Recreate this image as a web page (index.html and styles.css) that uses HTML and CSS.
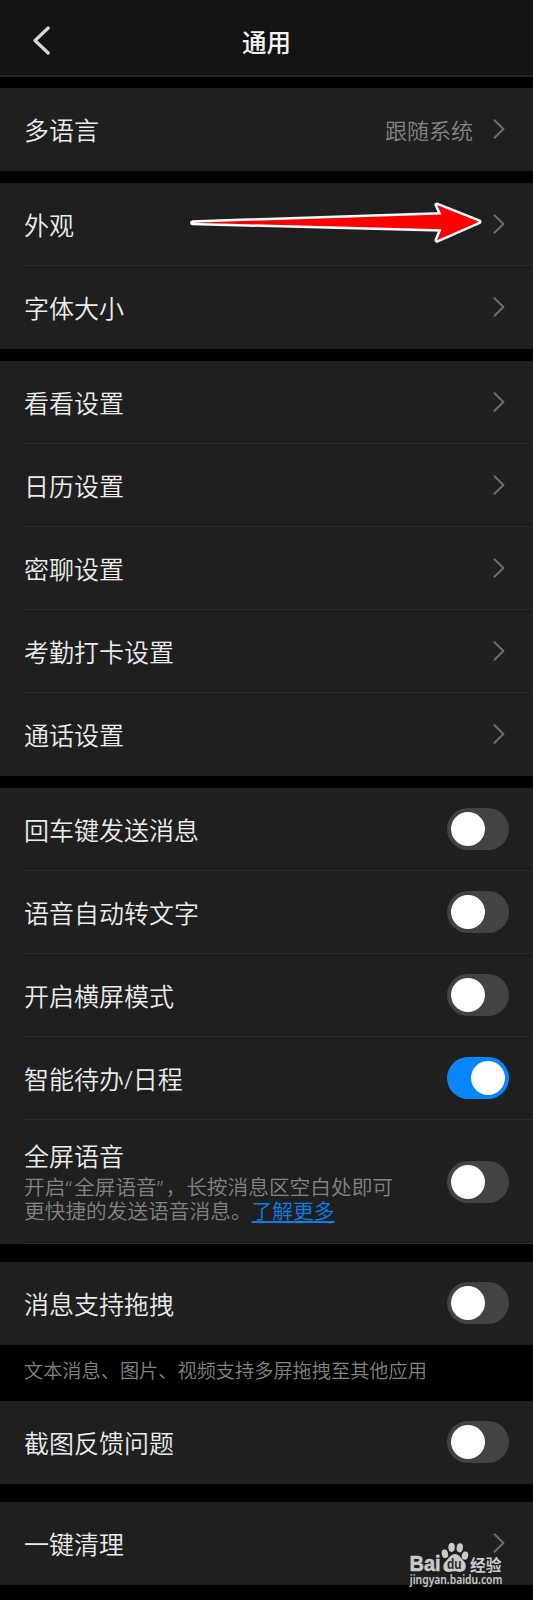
FILE: index.html
```html
<!DOCTYPE html>
<html lang="zh-CN">

<head>
    <meta charset="UTF-8">
    <title>通用</title>
    <link rel="stylesheet" href="styles.css">
</head>

<body>
    <svg class="defs" width="0" height="0">
        <symbol id="chevron" viewBox="0 0 12 20">
            <path d="M1.5 1.2 L10.4 10 L1.5 18.8" fill="none" stroke="#6e6e6e" stroke-width="2" stroke-linecap="round" stroke-linejoin="round" />
        </symbol>
    </svg>

    <header class="header">
        <svg class="back" width="18" height="29" viewBox="0 0 18 29">
            <path d="M15.2 2 L2 14.5 L15.2 27" fill="none" stroke="#d6d6d6" stroke-width="3.2" stroke-linecap="round" stroke-linejoin="round" />
        </svg>
        <h1>通用</h1>
    </header>

    <main>
        <section class="group">
            <div class="row">
                <span class="label">多语言</span>
                <span class="value">跟随系统</span>
                <svg class="chevron"><use href="#chevron" /></svg>
            </div>
        </section>

        <section class="group">
            <div class="row">
                <span class="label">外观</span>
                <svg class="chevron"><use href="#chevron" /></svg>
                <!-- Pointer to the appearance entry -->
                <svg class="pointer" width="300" height="50" viewBox="0 0 300 50">
                    <path d="M5.5 25.7 L254.5 17.5 L250 8 L292 24.8 L250 43.2 L254.5 32.3 Z" />
                </svg>
            </div>
            <div class="row">
                <span class="label">字体大小</span>
                <svg class="chevron"><use href="#chevron" /></svg>
            </div>
        </section>

        <section class="group">
            <div class="row">
                <span class="label">看看设置</span>
                <svg class="chevron"><use href="#chevron" /></svg>
            </div>
            <div class="row">
                <span class="label">日历设置</span>
                <svg class="chevron"><use href="#chevron" /></svg>
            </div>
            <div class="row">
                <span class="label">密聊设置</span>
                <svg class="chevron"><use href="#chevron" /></svg>
            </div>
            <div class="row">
                <span class="label">考勤打卡设置</span>
                <svg class="chevron"><use href="#chevron" /></svg>
            </div>
            <div class="row">
                <span class="label">通话设置</span>
                <svg class="chevron"><use href="#chevron" /></svg>
            </div>
        </section>

        <!-- Switches -->
        <section class="group">
            <div class="row">
                <span class="label">回车键发送消息</span>
                <span class="switch"></span>
            </div>
            <div class="row">
                <span class="label">语音自动转文字</span>
                <span class="switch"></span>
            </div>
            <div class="row">
                <span class="label">开启横屏模式</span>
                <span class="switch"></span>
            </div>
            <div class="row">
                <span class="label">智能待办/日程</span>
                <span class="switch on"></span>
            </div>
            <div class="row tall">
                <div class="label">
                    <div class="name">全屏语音</div>
                    <p class="desc">开启<span class="quote">“</span>全屏语音<span class="quote">”</span>，长按消息区空白处即可<br>更快捷的发送语音消息。<a href="#">了解更多</a></p>
                </div>
                <span class="switch"></span>
            </div>
        </section>

        <section class="group spaced">
            <div class="row">
                <span class="label">消息支持拖拽</span>
                <span class="switch"></span>
            </div>
        </section>
        <p class="note">文本消息、图片、视频支持多屏拖拽至其他应用</p>

        <section class="group after-note">
            <div class="row">
                <span class="label">截图反馈问题</span>
                <span class="switch"></span>
            </div>
        </section>

        <section class="group spaced">
            <div class="row">
                <span class="label">一键清理</span>
                <svg class="chevron"><use href="#chevron" /></svg>
            </div>
        </section>
    </main>

    <svg class="watermark" width="100" height="50" viewBox="0 0 100 50">
        <text class="wm-bai" x="1.5" y="31.3" textLength="31" lengthAdjust="spacingAndGlyphs">Bai</text>
        <ellipse cx="36.9" cy="13.8" rx="3.2" ry="4.3" transform="rotate(-12 36.9 13.8)" />
        <ellipse cx="43.6" cy="7.3" rx="3.2" ry="4.6" />
        <ellipse cx="51.8" cy="7.8" rx="3.2" ry="4.6" transform="rotate(8 51.8 7.8)" />
        <ellipse cx="57" cy="15.6" rx="3.2" ry="4.2" transform="rotate(12 57 15.6)" />
        <path d="M47 14 C51 14 52.5 18 55.5 20.8 C59.5 24.5 58.6 32 52 32 C49.5 32 48.5 31.3 46.5 31.3 C44.5 31.3 43.5 32 41 32 C34.5 32 33.8 25 37.8 21.2 C41 18 43 14 47 14 Z" />
        <text class="wm-du" x="39" y="29.3" textLength="14.5" lengthAdjust="spacingAndGlyphs">du</text>
        <text class="wm-cn" x="62" y="30.5" textLength="31.5" lengthAdjust="spacingAndGlyphs">经验</text>
        <text class="wm-url" x="1.8" y="44" textLength="92.5" lengthAdjust="spacingAndGlyphs">jingyan.baidu.com</text>
    </svg>
</body>

</html>
```

FILE: styles.css
```css
* {
    margin: 0;
    padding: 0;
    box-sizing: border-box;
}

body {
    position: relative;
    height: 1600px;
    overflow: hidden;
    background: #000000;
    color: #ececec;
    font-family: "Noto Sans", "Noto Sans CJK SC", sans-serif;
    font-weight: 350;
}

.defs {
    display: block;
}

.header {
    height: 77px;
    padding: 8px 33px 0;
    display: grid;
    grid-template-columns: 18px 1fr 18px;
    align-items: center;
    background: #131313;
    border-bottom: 2px solid #232323;
}

.back {
    margin-bottom: 3px;
}

.header h1 {
    padding-top: 2px;
    font-size: 24.5px;
    font-weight: 500;
    line-height: 36px;
    text-align: center;
    color: #f4f4f4;
}

main {
    padding-top: 11px;
}

.group {
    margin-bottom: 12px;
    background: #1f1f1f;
}

.group.spaced {
    margin-top: 18px;
    margin-bottom: 0;
}

.group.after-note {
    margin-bottom: 0;
}

.row {
    position: relative;
    height: 83px;
    padding: 0 24px;
    display: flex;
    align-items: center;
}

/* divider is inset on the left only */
.row:not(:last-child)::after,
.row.tall::after {
    content: '';
    position: absolute;
    left: 24px;
    right: 0;
    bottom: 0;
    height: 1px;
    background: #2e2e2e;
}

.label {
    flex: 1;
    font-size: 25px;
    line-height: 36px;
}

.value {
    margin-right: 19.5px;
    font-size: 22px;
    line-height: 32px;
    color: #838383;
}

.chevron {
    width: 12px;
    height: 20px;
    margin-right: 4.5px;
    margin-bottom: 1px;
}

.row.tall {
    height: 124px;
}

.name {
    margin-bottom: 3px;
    line-height: 32px;
}

.desc {
    margin-bottom: 2px;
    font-size: 20.7px;
    line-height: 24px;
    color: #838383;
    white-space: nowrap;
}

.desc .quote {
    letter-spacing: 2.2px;
}

.desc a {
    color: #0a80ea;
}

.switch {
    width: 62px;
    height: 42px;
    margin-bottom: 1px;
    padding: 4px;
    display: flex;
    border-radius: 21px;
    background: #434343;
}

.switch::before {
    content: '';
    width: 34px;
    height: 34px;
    border-radius: 50%;
    background: #ffffff;
}

.switch.on {
    justify-content: flex-end;
    background: #0886ff;
}

.note {
    height: 56px;
    padding: 12px 24px 0;
    font-size: 19.2px;
    line-height: 28px;
    color: #838383;
}

.pointer {
    position: absolute;
    left: 187px;
    top: 14px;
}

.pointer path {
    fill: #fe0000;
    stroke: #ffffff;
    stroke-width: 5px;
    stroke-linejoin: round;
    paint-order: stroke;
}

.watermark {
    position: absolute;
    left: 408px;
    top: 1540px;
    overflow: visible;
    fill: #c9c9c9;
}

.wm-bai {
    font: bold 21.5px "Liberation Sans", sans-serif;
    stroke: #c9c9c9;
    stroke-width: 0.6px;
}

.wm-du {
    font: bold 14px "Liberation Sans", sans-serif;
    fill: #2a2a2a;
}

.wm-cn {
    font: bold 16px "Noto Sans CJK SC", sans-serif;
}

.wm-url {
    font: 600 11.6px "Noto Sans", sans-serif;
}
```
